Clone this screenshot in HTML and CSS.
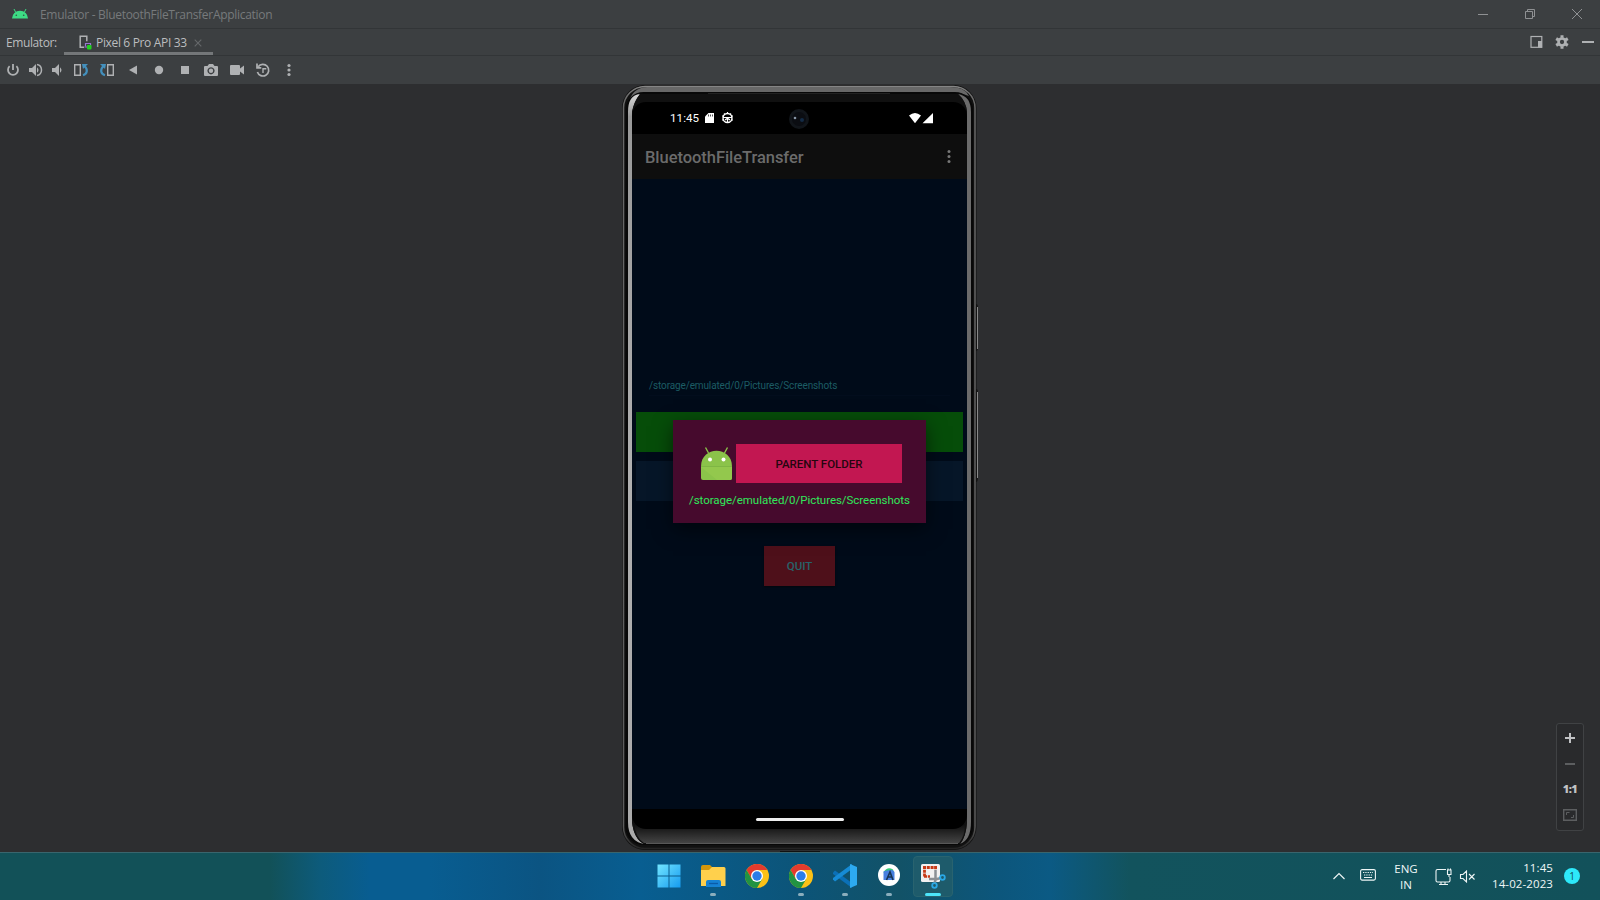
FILE: index.html
```html
<!DOCTYPE html>
<html lang="en">
<head>
<meta charset="utf-8">
<title>Emulator - BluetoothFileTransferApplication</title>
<link rel="stylesheet" href="styles.css">
</head>
<body>
<header class="titlebar">
  <svg class="droid" width="18" height="12" viewBox="0 0 18 12"><path d="M1 10.5a8 7.7 0 0 1 16 0z" fill="#3ddc84"/><path d="M4.8 4.5 3 1M13.2 4.5 15 1" stroke="#3ddc84" stroke-width="1"/><circle cx="5.3" cy="7.2" r=".8" fill="#315044"/><circle cx="12.7" cy="7.2" r=".8" fill="#315044"/></svg>
  <span class="window-title">Emulator - BluetoothFileTransferApplication</span>
  <svg class="window-buttons" width="106" height="12" viewBox="0 0 106 12" fill="none" stroke="#8f9193"><path d="M0 6.5h10M47.5 3.5h7v7h-7zM49.5 3.5v-2h7v7h-2M94 1l10 10M104 1 94 11"/></svg>
</header>
<nav class="tabs">
  <span class="tabs-label">Emulator:</span>
  <div class="tab">
    <svg class="tab-icon" width="13" height="15" viewBox="0 0 13 15"><path d="M5 12.2H1.2V1.2h6.6v5" fill="none" stroke="#afb1b3" stroke-width="1.5"/><path d="M6.5 11.5v-3h5v3" fill="none" stroke="#9876cf" stroke-width="1.2"/><path d="M5.5 12h3" stroke="#9876cf"/><rect x="8" y="10" width="4.5" height="4.5" rx="1" fill="#1fd31f"/></svg>
    <span class="tab-name">Pixel 6 Pro API 33</span>
    <svg class="tab-close" width="8" height="8" viewBox="0 0 8 8" stroke="#65686a" stroke-width="1.1"><path d="m.7.7 6.6 6.6m0-6.6L.7 7.3"/></svg>
  </div>
  <svg class="tab-tools" width="65" height="14" viewBox="0 0 65 14"><rect x="1" y="1.5" width="10.8" height="10.8" fill="none" stroke="#afb1b3" stroke-width="1.2"/><path d="M8 6h4v6.5H8z" fill="#afb1b3"/><circle cx="32" cy="7" r="3.5" fill="none" stroke="#afb1b3" stroke-width="2.7"/><g stroke="#afb1b3" stroke-width="3"><path d="M32 .3v2.5M32 11.2v2.5M26.2 3.65l2.1 1.25M35.7 9.1l2.1 1.25M37.8 3.65l-2.1 1.25M28.3 9.1l-2.1 1.25"/></g><path d="M52 6h12v2H52z" fill="#afb1b3"/></svg>
</nav>
<div class="toolbar">
  <svg width="300" height="20" viewBox="0 0 300 20" fill="#afb1b3">
    <path d="M9.6 6.2a5 5 0 1 0 6.8 0M13 4v6" fill="none" stroke="#afb1b3" stroke-width="1.8"/>
    <path d="M29 8h3l4-4v12l-4-4h-3zM37 7.2q3 2.8 0 5.6z"/><path d="M37 4.5c6 1.3 6 9.7 0 11" fill="none" stroke="#afb1b3" stroke-width="1.5"/>
    <path d="M52 8h3l4-4v12l-4-4h-3zM60 7.2q3 2.8 0 5.6z"/>
    <path d="M74.7 4.7h5.6v10.6h-5.6z" fill="none" stroke="#afb1b3" stroke-width="1.4"/><path d="M83 15.300c4.500-1.300 5-6 1.500-9.300" fill="none" stroke="#4390bd" stroke-width="2.200"/><path d="M82 4h6l-5 5z" fill="#4390bd"/>
    <path d="M107.7 4.7h5.6v10.6h-5.6z" fill="none" stroke="#afb1b3" stroke-width="1.4"/><path d="M105 15.300c-4.500-1.300-5-6-1.500-9.300" fill="none" stroke="#4390bd" stroke-width="2.200"/><path d="M106 4h-6l5 5z" fill="#4390bd"/>
    <path d="m129 10 8-4.5v9z"/><circle cx="159" cy="10" r="4.200"/><rect x="181" y="6" width="8" height="8"/>
    <path fill-rule="evenodd" d="M205 6h2.500l1.500-2h4l1.500 2h2.500q1 0 1 1v8q0 1-1 1h-12q-1 0-1-1V7q0-1 1-1zm6 1.200a3.600 3.600 0 1 0 .01 0z"/><circle cx="211" cy="10.800" r="2.200"/>
    <path d="M231 5h8q1 0 1 1v2.500l4-3v9l-4-3V14q0 1-1 1h-8q-1 0-1-1V6q0-1 1-1z"/>
    <path d="M258.200 6.800a5.800 5.800 0 1 1-.8 5.200M257 3.500v4.300h4.300" fill="none" stroke="#afb1b3" stroke-width="1.700"/><path d="M263 13V8.700h3.300" fill="none" stroke="#afb1b3" stroke-width="1.400"/>
    <circle cx="289" cy="5.500" r="1.600"/><circle cx="289" cy="10" r="1.600"/><circle cx="289" cy="14.500" r="1.600"/>
  </svg>
</div>
<main class="stage">
  <section class="phone">
    <svg class="frame" width="360" height="768" viewBox="620 84 360 768">
      <defs>
        <linearGradient id="rim" x2="0" y2="1"><stop offset="0" stop-color="#858585"/><stop offset=".008" stop-color="#707070"/><stop offset=".02" stop-color="#686868"/><stop offset=".97" stop-color="#5b5b5b"/><stop offset="1" stop-color="#252525"/></linearGradient>
        <linearGradient id="chin" x2="0" y2="1"><stop offset="0" stop-color="#0c0c0c"/><stop offset="1" stop-color="#444"/></linearGradient>
        <linearGradient id="left" x2="0" y2="1"><stop offset="0" stop-color="#d8d8d8"/><stop offset=".03" stop-color="#999"/><stop offset=".5" stop-color="#b0b0b0"/><stop offset="1" stop-color="#aaa"/></linearGradient>
      </defs>
      <path d="M976 304q2 0 2 3v41q0 3-2 3zM976 389q2 0 2 3v86q0 4-2 4z" fill="#171717"/><path d="M977.5 307v42M977.5 392v86" stroke="#888"/>
      <rect x="622" y="85" width="354.500" height="765" rx="23" fill="#111"/>
      <rect x="623.500" y="86.500" width="351.500" height="762" rx="21.500" fill="none" stroke="url(#rim)" stroke-width="1.500"/>
      <path d="M628 106q3-19 20-19h302q15 0 19 9-7-3-19-3H648q-14 0-20 13z" fill="#686868"/>
      <rect x="625.500" y="92" width="347.500" height="753" rx="18" fill="#080808"/>
      <path d="M628 112q0-17 12-18-6 8-8 18v710q2 17 12 22-16-3-16-22z" fill="url(#left)"/>
      <path d="M971 112q0-16-13-18 8 7 9 18v710q-1 15-7 22 11-4 11-22z" fill="#6b6b6b"/>
      <path d="M632 112q2-11 8-18h318q8 7 9 18v710q-1 15-7 22H644q-10-5-12-22z" fill="#101010"/>
      <path d="M634 824h331q0 12-6 19H644q-8-5-10-19z" fill="url(#chin)"/>
      <path d="M708 93.500h182" stroke="#222"/><path d="M646 843.500h312" stroke="#585858"/><path d="M780 851.500h40" stroke="#111"/>
    </svg>
    <div class="screen">
      <div class="status">
        <span class="clock">11:45</span>
        <svg width="30" height="12" viewBox="0 0 30 12"><path d="M3.500 1H9v10H0V4.500z" fill="#fff"/><path d="M3.500 2.500v2M5.500 2.500v2M7.500 2.500v2" stroke="#555"/><circle cx="22.500" cy="6" r="4.500" fill="none" stroke="#fff" stroke-width="1.400"/><path d="M18 5.500h9M22.500 6v5M22.500 0v2M19 1.500l1 1M26 1.500l-1 1M20 8l2-1.500M25 8l-2-1.500M17 4h2M26 4h2M17 8h2M26 8h2" stroke="#fff" stroke-width="1.200"/></svg>
        <svg class="lens" width="20" height="20" viewBox="0 0 20 20"><circle cx="10" cy="10" r="10" fill="#11151a"/><circle cx="10" cy="10" r="7" fill="#0b0d12"/><circle cx="6" cy="9" r="1.300" fill="#8795a5"/><circle cx="13" cy="11" r="2" fill="#142b46"/></svg>
        <svg class="signal" width="24" height="11" viewBox="0 0 24 11" fill="#fff"><path d="M0 2.500q6-5 12 0L6 10.300zM24 0v10.300H13.500z"/></svg>
      </div>
      <div class="appbar"><span>BluetoothFileTransfer</span><svg width="4" height="14" viewBox="0 0 4 14" fill="#777"><circle cx="2" cy="1.500" r="1.500"/><circle cx="2" cy="6.500" r="1.500"/><circle cx="2" cy="11.500" r="1.500"/></svg></div>
      <div class="app">
        <div class="path-field">/storage/emulated/0/Pictures/Screenshots</div>
        <div class="wide send"></div>
        <div class="wide list"></div>
        <div class="quit">QUIT</div>
        <div class="dialog">
          <div class="dialog-row">
            <svg width="33" height="34" viewBox="0 0 33 34"><path d="M1 19C1 -2 32 -2 32 19z" transform="translate(0 .5)" fill="#8bc34a"/><path d="M1 19h31v12q0 2-2 2H3q-2 0-2-2z" fill="#8bc34a"/><path d="M1 20h31v11q0 2-2 2H17z" fill="#93c84d"/><path d="M1 19.500h31" stroke="#7cb342" stroke-width=".8"/><path d="m8.500 6-3-5.500m19 5.500 3-5.500" stroke="#8bc34a" stroke-width="1.400"/><circle cx="10" cy="12.500" r="2" fill="#fff"/><circle cx="23.500" cy="12.500" r="2" fill="#fff"/></svg>
            <div class="parent">PARENT FOLDER</div>
          </div>
          <div class="dialog-path">/storage/emulated/0/Pictures/Screenshots</div>
        </div>
      </div>
      <div class="gesture"><i></i></div>
    </div>
  </section>
  <aside class="zoom">
    <svg width="26" height="52" viewBox="1 0 26 52"><path d="M14 9v10M9 14h10" stroke="#c0c2c4" stroke-width="2"/><path d="M9 40h10" stroke="#5c5e60" stroke-width="2"/></svg>
    <span class="ratio">1:1</span>
    <svg width="26" height="26" viewBox="1 79 26 26"><path d="M7.700 86.700h12.600v10.600H7.700z" fill="none" stroke="#5c5e60" stroke-width="1.400"/><path d="M10.500 92v-2.500h3M15 94.500h2.500V92" fill="none" stroke="#5c5e60"/></svg>
  </aside>
</main>
<footer class="taskbar">
  <div class="apps">
    <div class="task"><svg width="24" height="24" viewBox="0 0 24 24"><defs><linearGradient id="win" x2="1" y2="1"><stop stop-color="#72e5ff"/><stop offset="1" stop-color="#159bf0"/></linearGradient></defs><path fill="url(#win)" d="M.5.500H11.500v11H.5zM12.500.500h11v11h-11zM.5 12.500h11v11H.5zM12.500 12.500h11v11h-11z"/></svg></div>
    <div class="task open"><svg width="25" height="24" viewBox="0 0 25 24"><path d="M0 3q0-2 2-2h7l2 2v4H0z" fill="#d4960b"/><path d="M0 6h8l3-3h12q1.500 0 1.500 1.500V22H0z" fill="#ffd04c"/><path d="M5 23v-5q0-2 2-2h11q2 0 2 2v5z" fill="#1682d4"/><path d="M8 19.500h9" stroke="#0b5ba8" stroke-width="1.300"/></svg></div>
    <div class="task"><svg width="24" height="24" viewBox="0 0 24 24"><circle cx="12" cy="12" r="12" fill="#fbc116"/><path d="M1.600 6A12 12 0 0 1 22.400 6H12L6.800 15z" fill="#e33b2e"/><path d="M1.600 6a12 12 0 0 0 10.400 18L17.200 15H6.800z" fill="#229342"/><circle cx="12" cy="12" r="6" fill="#fff"/><circle cx="12" cy="12" r="4.700" fill="#2b7de9"/></svg></div>
    <div class="task open"><svg width="24" height="24" viewBox="0 0 24 24"><circle cx="12" cy="12" r="12" fill="#fbc116"/><path d="M1.600 6A12 12 0 0 1 22.400 6H12L6.800 15z" fill="#e33b2e"/><path d="M1.600 6a12 12 0 0 0 10.400 18L17.200 15H6.800z" fill="#229342"/><circle cx="12" cy="12" r="6" fill="#fff"/><circle cx="12" cy="12" r="4.700" fill="#2b7de9"/></svg></div>
    <div class="task open"><svg width="24" height="24" viewBox="0 0 24 24"><path d="m0 8.500 2-2 17 12.500v5L0 10z" fill="#0b70b7"/><path d="m0 15.500 2 2L19 5V0L0 14z" fill="#168bd5"/><path d="m17 0 7 3v18l-7 3z" fill="#2daaf0"/></svg></div>
    <div class="task open"><svg width="22" height="22" viewBox="0 0 22 22"><circle cx="11" cy="11" r="11" fill="#fff"/><path d="M5.500 8q4-6 9.500-2.500l1 3H5.500z" fill="#35c978"/><path d="M5.500 7.500l3-1 6-.5 2 2V16h-11z" fill="#477fe0"/><path d="m8.500 16 3.500-8 3 8M10 13h4" fill="none" stroke="#173454" stroke-width="1.600"/></svg></div>
    <div class="task active"><svg width="25" height="25" viewBox="0 0 25 25"><rect width="19" height="18" rx="1.500" fill="#f1f1f1"/><path d="M3.500 2v11M2 3.500h14" fill="none" stroke="#c73a17" stroke-width="2.800" stroke-dasharray="3 .8"/><path d="M3 12.500h6M14.500 2v4" fill="none" stroke="#c73a17" stroke-width="2.500" stroke-dasharray="3 .8"/><path d="M14.500 6v10l-1 3M8 15h8l4-1" fill="none" stroke="#8b9095" stroke-width="2.500"/><g fill="none" stroke="#2aa8e5" stroke-width="1.800"><circle cx="21.500" cy="13.500" r="2.300"/><circle cx="13.500" cy="21.500" r="2.300"/></g></svg></div>
  </div>
  <div class="tray">
    <svg class="chev" width="12" height="8" viewBox="0 0 12 8"><path d="M.5 7 6 1.500 11.500 7" fill="none" stroke="#edf5f5" stroke-width="1.200"/></svg>
    <svg class="keys" width="16" height="12" viewBox="0 0 16 12"><rect x=".6" y=".6" width="14.800" height="10.500" rx="1.500" fill="none" stroke="#edf5f5" stroke-width="1.100"/><path d="M3 3.500h10M4 6h9" stroke="#edf5f5" stroke-dasharray="1.300 1"/><path d="M4 8.500h8" stroke="#edf5f5"/></svg>
    <div class="lang">ENG<br>IN</div>
    <svg class="net" width="41" height="18" viewBox="0 0 41 18" fill="none" stroke="#edf5f5" stroke-width="1.100"><path d="M11 1.500H2.500Q1 1.500 1 3v9.500Q1 14 2.500 14h11q1.500 0 1.500-1.500V9M6 14v2.500M10 14v2.500M4 16.500h9M12.500 2h3.500v4.500h-3.500zM14 6.500V9M13 2V.5M15.500 2V.5M25.500 6.500h2.500l3.500-3.500v11L28 10.500h-2.500zM34 6l5.500 5.500M39.500 6 34 11.500"/></svg>
    <div class="time">11:45<br>14-02-2023</div>
    <div class="badge">1</div>
  </div>
</footer>
</body>
</html>
```

FILE: styles.css
```css
* { box-sizing: border-box; }
body { margin: 0; width: 1600px; height: 900px; overflow: hidden; display: grid; grid-template-rows: 29px 27px 28px 768px 48px; background: #2d2e30; font-family: "Noto Sans", "Open Sans", sans-serif; }
svg { display: block; flex: none; }
.titlebar { background: #3c3f41; border-bottom: 1px solid #323537; display: flex; align-items: center; padding-left: 11px; }
.window-title { margin-left: 11px; padding-top: 1px; color: #777a7c; font: 12px "Open Sans", sans-serif; letter-spacing: -.3px; white-space: nowrap; }
.window-buttons { margin-left: auto; margin-right: 16px; }
.tabs { background: #3c3f41; border-bottom: 1px solid #323537; display: flex; align-items: stretch; color: #bbbdbf; font: 12px/28px "Open Sans", sans-serif; padding-left: 6px; }
.tabs-label { width: 58px; letter-spacing: -.4px; }
.tab { width: 149px; display: flex; align-items: center; padding-left: 15px; border-bottom: 3px solid #747779; white-space: nowrap; }
.tab-icon { margin-top: 4px; }
.tab-name { margin: 4px 7px 0 4px; letter-spacing: -.34px; }
.tab-close { margin-top: 4px; }
.tab-tools { margin: 6px 5px 0 auto; }
.toolbar { background: #3c3f41; padding-top: 4px; }
.stage { position: relative; padding: 0 0 0 620px; }
.phone { position: relative; width: 360px; height: 768px; padding: 18px 13px 0 12px; }
.frame { position: absolute; left: 0; top: 0; }
.screen { position: relative; width: 335px; height: 727px; border-radius: 14px; overflow: hidden; display: grid; grid-template-rows: 32px 45px 630px 20px; font-family: Roboto, sans-serif; background: #000; }
.status { display: flex; align-items: center; color: #fff; padding-left: 38px; }
.clock { font-size: 11.5px; width: 35px; letter-spacing: .1px; }
.lens { margin-left: 54px; margin-top: 2px; }
.signal { margin-left: 100px; }
.appbar { background: #0e0e0e; color: #6b6b6b; display: flex; align-items: center; justify-content: space-between; padding: 1px 16px 0 13px; font-size: 16.5px; font-weight: 500; letter-spacing: -.05px; }
.app { background: #000b19; position: relative; padding: 200px 4px 0; display: flex; flex-direction: column; align-items: center; }
.path-field { width: 301px; height: 17px; margin-bottom: 16px; border-bottom: 1px solid #020d1d; color: #1c5c64; font-size: 10px; line-height: 13px; letter-spacing: -.13px; }
.wide { width: 327px; height: 40px; flex: none; }
.send { background: #064d09; margin-bottom: 9px; }
.list { background: #061628; margin-bottom: 45px; }
.quit { width: 71px; height: 40px; background: #4e101a; color: #27636a; font-size: 11.5px; font-weight: 500; display: grid; place-items: center; box-shadow: 0 1px 2px #0008; }
.dialog { position: absolute; left: 41px; top: 241px; width: 253px; height: 103px; background: #460a2d; box-shadow: 0 6px 18px #0008; padding: 24px 0 0 27px; }
.dialog-row { display: flex; gap: 3px; align-items: center; }
.parent { width: 166px; height: 39px; background: #c21751; color: #26060f; font-size: 11.5px; font-weight: 500; display: grid; place-items: center; }
.dialog-path { margin: 10px 0 0 -11px; color: #30e75a; font-size: 11.5px; line-height: 14px; letter-spacing: -.04px; white-space: nowrap; }
.gesture { display: flex; justify-content: center; padding-top: 9px; }
.gesture i { width: 88px; height: 3px; border-radius: 2px; background: #eee; }
.zoom { position: absolute; left: 1556px; top: 639px; width: 28px; height: 108px; border: 1px solid #404244; border-radius: 3px; background: #292a2c; }
.ratio { display: block; height: 26px; color: #c0c2c4; font: 800 11px/26px "Open Sans", sans-serif; text-align: center; letter-spacing: -.5px; }
.taskbar { border-top: 1px solid #39656d; background: linear-gradient(90deg, #125158 0, #125158 270px, #0d5b7b 320px, #085d91 370px, #085d91 430px, #0b5482 540px, #085e91 640px, #0c5478 800px, #125267 900px, #0c567c 1000px, #0b5a84 1050px, #12535d 1130px, #12515a 100%); display: flex; padding-left: 648px; justify-content: space-between; }
.apps { display: flex; gap: 4px; padding-top: 3px; margin-left: 1px; }
.task { width: 40px; height: 41px; position: relative; display: flex; align-items: flex-start; justify-content: center; padding-top: 8px; border-radius: 4px; }
.open::after, .active::after { content: ""; position: absolute; bottom: 1px; width: 6px; height: 3px; border-radius: 2px; background: #8baebd; }
.active { background: #1e5b6b; border: 1px solid #29636f; padding-top: 7px; }
.active::after { width: 16px; background: #4de5fa; bottom: 0; }
.tray { display: flex; color: #f0f7f7; font: 11.5px/16px "Open Sans", sans-serif; padding-right: 20px; }
.chev { margin: 19px 15px 0 0; }
.keys { margin: 16px 0 0; }
.lang { width: 52px; margin: 8px 7px 0 0; padding-left: 8px; text-align: center; white-space: nowrap; }
.net { margin-top: 15px; }
.time { width: 77px; text-align: right; margin-top: 7px; white-space: nowrap; letter-spacing: .1px; }
.badge { margin: 15px 0 0 11px; width: 16px; height: 16px; border-radius: 50%; background: #2de9fa; color: #125158; font-size: 10px; line-height: 16px; text-align: center; }
```
